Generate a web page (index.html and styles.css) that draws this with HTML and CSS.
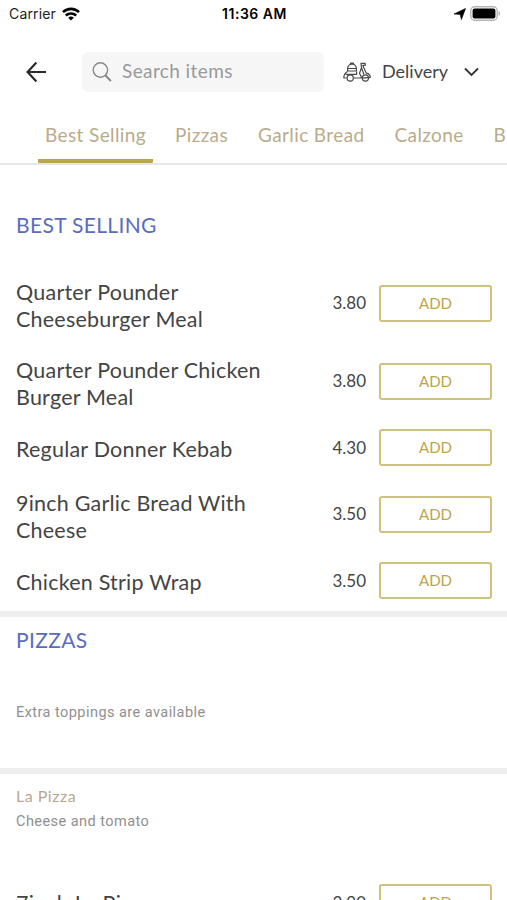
FILE: index.html
```html
<!DOCTYPE html>
<html lang="en">
<head>
    <meta charset="UTF-8">
    <meta name="viewport" content="width=device-width, initial-scale=1.0">
    <title>Menu</title>
    <link rel="stylesheet" href="styles.css">
</head>
<body>
    <div class="status-bar">
        <div class="carrier">
            <span>Carrier</span>
            <svg width="18" height="14" viewBox="0 0 18 14" fill="none" stroke="#000" stroke-width="2.6">
                <path d="M1 5.1a11.6 11.6 0 0 1 16 0"/>
                <path d="M3.8 8.5a7.6 7.6 0 0 1 10.4 0"/>
                <path d="M9 13.4L6.2 10.8a4 4 0 0 1 5.6 0z" fill="#000" stroke="none"/>
            </svg>
        </div>
        <div class="time">11:36 AM</div>
        <div class="indicators">
            <svg width="12" height="12" viewBox="0 0 12 12"><path d="M11.6.4L7.4 11.6 6.2 6.4 0 6z" fill="#000" stroke="#000" stroke-width=".6"/></svg>
            <svg width="31" height="15" viewBox="0 0 31 15">
                <rect x=".8" y=".8" width="26.4" height="13.4" rx="3.8" fill="#fff" stroke="#b5b5b5" stroke-width="1.4"/>
                <rect x="2.6" y="2.6" width="22.8" height="9.8" rx="2" fill="#000"/>
                <path d="M28.6 5.2v4.6c1.8-.6 1.8-4 0-4.6z" fill="#aaa"/>
            </svg>
        </div>
    </div>

    <header class="header">
        <button class="back" aria-label="Back">
            <svg width="22" height="22" viewBox="0 0 22 22" fill="none" stroke="#2b2b2b" stroke-width="2.2"><path d="M21 11H2.6M11.4 1.5L2.6 11l8.8 9.5"/></svg>
        </button>
        <label class="search">
            <svg width="20" height="20" viewBox="0 0 20 20" fill="none" stroke="#888" stroke-width="1.4"><circle cx="8.4" cy="8" r="7.2"/><path d="M13.3 13.2l5.6 5.8" stroke-width="2"/></svg>
            <input type="text" placeholder="Search items">
        </label>
        <button class="delivery">
            <svg width="28" height="20" viewBox="0 0 28 20" fill="none" stroke="#4a4a4a" stroke-width="1.2" stroke-linejoin="round">
                <path d="M4.6 9V6.6a4.4 4.4 0 0 1 8.8 0V9zM7.6 2.5V1h2.8v1.5M4.6 6.5h8.8"/>
                <path d="M4.6 9.5C2 10.8.8 13 .8 16h2.8M2.6 12.3h11V9.4M10.6 16h8.2l-2.3-4.8 2-5.4-.5-4.4h4.2v2h-2.4l3.5 7.8c2.5.4 3.9 2 4 4.2l-7.8.8M18.6 6l2.3 6.5"/>
                <circle cx="7.2" cy="16" r="3.1"/><circle cx="22.4" cy="16" r="3.1"/>
            </svg>
            <span>Delivery</span>
            <svg width="15" height="10" viewBox="0 0 15 10" fill="none" stroke="#333" stroke-width="1.8"><path d="M1 1.5l6.5 6.5L14 1.5"/></svg>
        </button>
    </header>

    <nav class="tabs">
        <a class="tab active">Best Selling</a>
        <a class="tab">Pizzas</a>
        <a class="tab">Garlic Bread</a>
        <a class="tab">Calzone</a>
        <a class="tab">Burgers</a>
    </nav>

    <section class="section best-selling">
        <h2>BEST SELLING</h2>
        <div class="item double">
            <div class="name">Quarter Pounder Cheeseburger Meal</div>
            <div class="price">3.80</div>
            <button class="add">ADD</button>
        </div>
        <div class="item double">
            <div class="name">Quarter Pounder Chicken Burger Meal</div>
            <div class="price">3.80</div>
            <button class="add">ADD</button>
        </div>
        <div class="item">
            <div class="name">Regular Donner Kebab</div>
            <div class="price">4.30</div>
            <button class="add">ADD</button>
        </div>
        <div class="item double">
            <div class="name">9inch Garlic Bread With Cheese</div>
            <div class="price">3.50</div>
            <button class="add">ADD</button>
        </div>
        <div class="item">
            <div class="name">Chicken Strip Wrap</div>
            <div class="price">3.50</div>
            <button class="add">ADD</button>
        </div>
    </section>

    <section class="section pizzas">
        <h2>PIZZAS</h2>
        <p class="note">Extra toppings are available</p>
    </section>

    <section class="section la-pizza">
        <h3>La Pizza</h3>
        <p class="note">Cheese and tomato</p>
        <div class="item">
            <div class="name">7inch La Pizza</div>
            <div class="price">3.90</div>
            <button class="add">ADD</button>
        </div>
    </section>
</body>
</html>
```
FILE: styles.css
```css
* {
    box-sizing: border-box;
}
body {
    margin: 0;
    height: 900px;
    overflow: hidden;
    background: #fff;
    color: #444;
    font-family: Lato, sans-serif;
}
button {
    padding: 0;
    border: none;
    background: none;
    font-family: inherit;
    color: inherit;
}
svg {
    display: block;
    flex: none;
}
.status-bar {
    display: grid;
    grid-template-columns: 1fr auto 1fr;
    align-items: center;
    height: 27px;
    padding: 0 7px 0 9px;
    font-family: Inter, sans-serif;
    font-size: 14px;
    color: #222;
}
.carrier {
    display: flex;
    align-items: center;
    gap: 6px;
    letter-spacing: 0.15px;
}
.time {
    font-weight: 600;
    letter-spacing: 0.5px;
    color: #000;
}
.indicators {
    display: flex;
    justify-content: flex-end;
    align-items: center;
    gap: 4px;
}
.indicators svg:last-child {
    margin-right: -1px;
}
.header {
    display: flex;
    align-items: center;
    height: 89px;
    padding-left: 25px;
}
.back {
    width: 22px;
    margin-right: 35px;
}
.search {
    display: flex;
    align-items: center;
    gap: 10px;
    width: 242px;
    height: 40px;
    padding: 0 10px;
    border-radius: 6px;
    background: #f6f6f6;
}
.search input {
    width: 180px;
    padding: 0 0 2px;
    border: none;
    background: none;
    font-family: inherit;
    font-size: 19px;
    letter-spacing: 0.4px;
}
.search input::placeholder {
    color: #999;
}
.delivery {
    display: flex;
    align-items: center;
    margin-left: 19px;
    font-size: 18px;
}
.delivery span {
    width: 82px;
    margin-left: 11px;
    padding-bottom: 1px;
    text-align: left;
}
.tabs {
    display: flex;
    gap: 30px;
    height: 49px;
    padding-left: 38px;
    border-bottom: 2px solid #e6e6e8;
    overflow: hidden;
}
.tab {
    flex: none;
    height: 47px;
    line-height: 38px;
    font-size: 19px;
    letter-spacing: 0.38px;
    color: #b9ab8b;
}
.tab.active {
    width: 115px;
    margin-right: -8px;
    border-bottom: 4px solid #b9a64c;
    border-radius: 1px;
    text-align: center;
}
.section {
    padding: 0 15px 0 16px;
}
h2 {
    margin: 0;
    font-size: 21px;
    font-weight: 400;
    line-height: 28px;
    letter-spacing: 0.35px;
    color: #5a6cc0;
}
h3 {
    margin: 0;
    font-size: 16px;
    font-weight: 400;
    line-height: 24px;
    letter-spacing: 0.5px;
    color: #b9a78c;
}
.note {
    margin: 0;
    font-family: Roboto, sans-serif;
    font-size: 14.5px;
    line-height: 26px;
    letter-spacing: 0.45px;
    color: #909090;
}
.best-selling {
    height: 446px;
    padding-top: 46px;
}
.best-selling h2 {
    margin-bottom: 25px;
}
.item {
    display: flex;
    align-items: center;
    height: 55px;
}
.item.double {
    height: 78px;
}
.name {
    width: 260px;
    padding-top: 3px;
    font-size: 21.5px;
    line-height: 27px;
    letter-spacing: 0.22px;
}
.double .name {
    padding-top: 6px;
}
.price {
    width: 90px;
    margin-right: 13px;
    padding-bottom: 1px;
    font-size: 17px;
    text-align: right;
}
.add {
    width: 113px;
    height: 37px;
    padding-bottom: 1px;
    border: 2px solid #cfc27e;
    border-radius: 3px;
    font-size: 15px;
    color: #b9a64c;
}
.pizzas,
.la-pizza {
    border-top: 6px solid #eee;
}
.pizzas {
    height: 157px;
    padding-top: 9px;
}
.pizzas h2 {
    margin-bottom: 46px;
}
.la-pizza {
    padding-top: 10px;
}
.la-pizza h3 {
    margin-bottom: 1px;
}
.la-pizza .item {
    margin-top: 40px;
}
.la-pizza .name {
    padding-top: 2px;
}
```
